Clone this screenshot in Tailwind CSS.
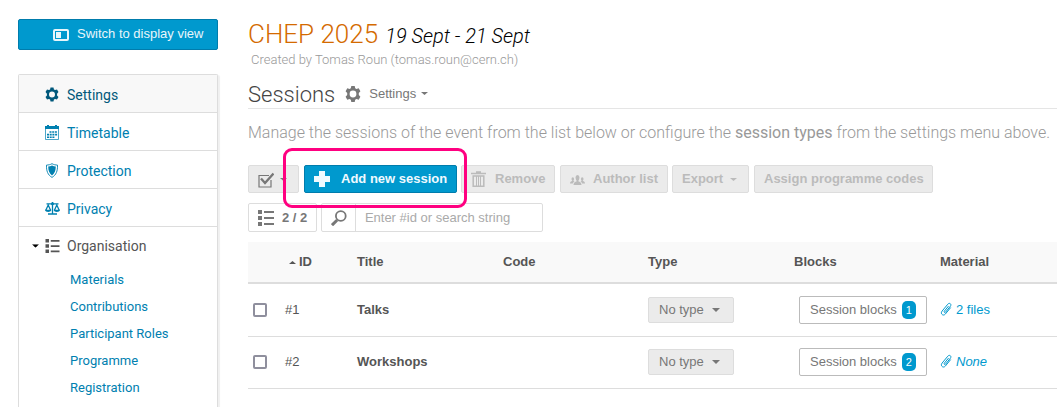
<!DOCTYPE html>
<html lang="en">
<head>
<meta charset="utf-8">
<title>CHEP 2025 - Sessions</title>
<script src="https://cdn.jsdelivr.net/npm/@tailwindcss/browser@4"></script>
</head>
<body class="bg-white font-['Liberation_Sans',sans-serif] text-[13px] leading-4 text-[#555]">
<svg class="hidden" aria-hidden="true">
  <symbol id="gear" viewBox="0 0 16 16"><path fill="currentColor" fill-rule="evenodd" d="M6.300 0h3.400l.5 2.200 1.300.7 2.200-.7 1.700 3L13.800 7v2l1.600 1.800-1.700 3-2.200-.7-1.300.7-.5 2.200H6.300l-.5-2.200-1.300-.7-2.200.7-1.700-3L2.200 9V7L.6 5.200l1.700-3 2.200.7 1.300-.7zM8 4.600a3.400 3.400 0 1 0 0 6.800 3.400 3.400 0 0 0 0-6.800z"/></symbol>
  <symbol id="list" viewBox="0 0 16 16"><path fill="currentColor" d="M0 0h4v4H0zM0 6h4v4H0zM0 12h4v4H0zM6 1h10v2H6zM6 7h10v2H6zM6 13h10v2H6z"/></symbol>
  <symbol id="caret" viewBox="0 0 8 4"><path fill="currentColor" d="M0 0h8L4 4z"/></symbol>
  <symbol id="clip" viewBox="0 0 12 14"><path fill="none" stroke="currentColor" stroke-linecap="round" stroke-linejoin="round" d="M8.300 4.400 4.300 9.200c-.7 1 .5 1.800 1.200 1l4.900-6c1.500-2-.9-4-2.600-2L2 9.200c-2 2.500 1.200 5.300 3.300 2.900l5.200-6.300"/></symbol>
</svg>
<div class="relative flex h-screen gap-[30px] overflow-hidden pl-[18px]">
  <aside class="flex w-[200px] shrink-0 flex-col gap-6 pt-[19px] font-[Roboto,sans-serif]">
    <button type="button" class="flex h-[31px] shrink-0 items-center gap-2 rounded-[2px] border border-[#007cac] bg-[#0099ce] pb-px pl-[34px] font-['Liberation_Sans',sans-serif] text-[13px] text-[#e8f6fb]">
      <svg class="mt-px h-3 w-4" viewBox="0 0 16 12"><rect x="1" y="1" width="14" height="10" rx="1" fill="none" stroke="currentColor" stroke-width="2"/><path fill="currentColor" d="M3 3h5v6H3z"/></svg>
      Switch to display view
    </button>
    <nav class="flex grow flex-col rounded-t-[2px] border border-b-0 border-[#ddd] text-sm leading-5 text-[#0080b0] shadow-[2px_1px_1px_#f0f0f0]">
      <a href="#" class="flex h-[38px] items-center gap-2 border-b border-[#ddd] bg-[#f8f8f8] pt-[2px] pl-[26px] text-[#00587b]"><svg class="h-[15px] w-[14px]"><use href="#gear"/></svg>Settings</a>
      <a href="#" class="flex h-[38px] items-center gap-2 border-b border-[#ddd] pt-[2px] pl-[26px]">
        <svg class="h-[15px] w-[14px]" viewBox="0 0 14 15"><path fill="currentColor" d="M0 1h2V0h2v1h6V0h2v1h2v3H0z"/><path fill="none" stroke="currentColor" stroke-opacity=".7" d="M.5 4v10.500h13V4"/><path fill="none" stroke="currentColor" stroke-width="1.600" stroke-dasharray="2 .7" d="M4.500 7h8M2 9.600h10.500M2 12.200h8"/></svg>Timetable</a>
      <a href="#" class="flex h-[38px] items-center gap-2 border-b border-[#ddd] pt-[2px] pl-[26px]">
        <svg class="h-[15px] w-[14px]" viewBox="0 0 14 15"><path fill="none" stroke="currentColor" stroke-width=".9" d="M7 .7c1.700 1 3.600 1.300 5.500 1.400C12.700 8 11.200 12 7 14.400 2.800 12 1.300 8 1.500 2.100 3.400 2 5.300 1.700 7 .7z"/><path fill="currentColor" d="M7 2.600c1.200.6 2.500.9 3.800 1-.1 4.200-1.100 7-3.800 9-2.700-2-3.700-4.800-3.800-9 1.300-.1 2.600-.4 3.800-1z"/></svg>Protection</a>
      <a href="#" class="flex h-[38px] items-center gap-[7px] border-b border-[#ddd] pt-[2px] pl-[26px]">
        <svg class="h-[13px] w-[15px]" viewBox="0 0 15 13"><path fill="none" stroke="currentColor" stroke-width="1.300" d="M1.500 1.800h12M7.500 0v11.500M3 12h9M.7 8.500 3.200 3l2.500 5.500M9.300 8.500 11.800 3l2.500 5.500"/><path fill="currentColor" d="M0 7.800h6.300c-.2 3-6.100 3-6.300 0zM8.700 7.800H15c-.2 3-6.100 3-6.300 0zM6 1.800a1.500 1.500 0 0 1 3 0 1.500 1.500 0 0 1-3 0z"/></svg>Privacy</a>
      <a href="#" class="flex h-[38px] items-center pl-[13px] text-[#555]"><svg class="mr-[6px] h-[4px] w-[7px] text-black" viewBox="0 0 8 4"><use href="#caret"/></svg><svg class="mr-[7px] h-[14px] w-[15px]"><use href="#list"/></svg>Organisation</a>
      <ul class="flex flex-col pt-px pl-[51px] text-[13px] leading-[27px]">
        <li><a href="#">Materials</a></li>
        <li><a href="#">Contributions</a></li>
        <li><a href="#">Participant Roles</a></li>
        <li><a href="#">Programme</a></li>
        <li><a href="#">Registration</a></li>
      </ul>
    </nav>
  </aside>

  <main class="min-w-0 grow pt-[18px]">
    <header class="font-[Roboto,sans-serif] font-light">
      <h1 class="flex items-baseline gap-[7px] text-[26px] leading-8 text-[#d46a00]">CHEP 2025 <span class="text-xl leading-8 text-black italic">19 Sept - 21 Sept</span></h1>
      <p class="pl-[3px] text-[13px] leading-4 text-[#999]">Created by Tomas Roun (tomas.roun@cern.ch)</p>
    </header>
    <div class="mt-3 flex h-[29px] items-center border-b border-[#e5e5e5]">
      <h2 class="pt-px font-[Roboto,sans-serif] text-[22px] leading-7 font-light text-[#444]">Sessions</h2>
      <button type="button" class="ml-[10px] flex items-center pb-px text-[#777]"><svg class="mr-2 h-4 w-4"><use href="#gear"/></svg>Settings<svg class="ml-[5px] h-[3px] w-[7px]" viewBox="0 0 8 4" preserveAspectRatio="none"><path fill="currentColor" d="M0 0h8L4 4z"/></svg></button>
    </div>
    <p class="mt-3 font-[Roboto,sans-serif] text-base leading-6 font-light whitespace-nowrap text-[#999]">Manage the sessions of the event from the list below or configure the <b class="font-normal">session types</b> from the settings menu above.</p>

    <div class="mt-5 flex gap-[5px] font-bold text-[#bbb]">
      <button type="button" aria-label="Select" class="flex h-7 w-[51px] items-center gap-[6px] rounded-[2px] border border-[#ddd] bg-[#ebebeb] pl-[9px] text-[#777]">
        <svg class="mt-px h-4 w-4" viewBox="0 0 16 16"><path fill="none" stroke="currentColor" stroke-width="1.200" d="M11 3.500H1V15h12V8"/><path fill="none" stroke="currentColor" stroke-width="2.300" d="m3 6.500 4 4.500 8.500-9.500"/></svg>
        <svg class="h-[3px] w-[7px]" viewBox="0 0 8 4" preserveAspectRatio="none"><path fill="currentColor" d="M0 0h8L4 4z"/></svg></button>
      <button type="button" class="flex h-7 w-[153px] items-center gap-[11px] rounded-[2px] border border-[#007cac] bg-[#0099ce] pl-[9px] text-[#f0faff]"><svg class="h-4 w-4" viewBox="0 0 16 16"><path fill="currentColor" d="M5 0h6v5h5v6h-5v5H5v-5H0V5h5z"/></svg>Add new session</button>
      <button type="button" disabled class="-ml-px flex h-7 w-[94px] items-center gap-[9px] rounded-[2px] border border-[#ddd] bg-[#ebebeb] pl-[9px]"><svg class="h-4 w-[15px]" viewBox="0 0 15 16"><path fill="none" stroke="currentColor" stroke-width="1.500" d="M0 2.500h15M5 1h5M2.200 5h10.600v10.200H2.200z"/><path stroke="currentColor" d="M5.500 5v10M7.500 5v10M9.500 5v10"/></svg>Remove</button>
      <button type="button" disabled class="flex h-7 w-[108px] items-center gap-2 rounded-[2px] border border-[#ddd] bg-[#ebebeb] pl-[9px]"><svg class="mt-[2px] h-[10px] w-[15px]" viewBox="0 0 15 10"><g fill="currentColor"><ellipse cx="7.500" cy="2.800" rx="2" ry="2.700"/><path d="M6.500 5h2v1.500c1.500.4 3 .9 3 3.500h-8c0-2.600 1.500-3.100 3-3.500z"/><ellipse cx="2.800" cy="4" rx="1.300" ry="1.800"/><path d="M0 8.500c0-1.800 1-2.200 2.200-2.500L2.300 5h1l.2 1 1 .4C3.500 7 3 7.600 2.800 8.500z"/><ellipse cx="12.200" cy="4" rx="1.300" ry="1.800"/><path d="M15 8.500c0-1.800-1-2.200-2.200-2.500l-.1-1h-1l-.2 1-1 .4c1 .6 1.500 1.200 1.700 2.100z"/></g></svg>Author list</button>
      <button type="button" disabled class="-ml-px flex h-7 w-[77px] items-center gap-[7px] rounded-[2px] border border-[#ddd] bg-[#ebebeb] pl-[9px]">Export<svg class="h-[3px] w-[7px]" viewBox="0 0 8 4" preserveAspectRatio="none"><path fill="currentColor" d="M0 0h8L4 4z"/></svg></button>
      <button type="button" disabled class="flex h-7 w-[179px] items-center rounded-[2px] border border-[#ddd] bg-[#ebebeb] pl-[9px]">Assign programme codes</button>
    </div>

    <div class="mt-[10px] flex gap-1 text-[#777]">
      <div class="flex h-[29px] w-[69px] items-center gap-2 rounded-[2px] border border-[#ddd] pl-[9px] font-bold"><svg class="h-4 w-4"><use href="#list"/></svg>2 / 2</div>
      <div class="flex h-[29px] w-[222px] rounded-[2px] border border-[#ddd]">
        <label for="search" aria-label="Search" class="flex w-[35px] items-center border-r border-[#ddd] pl-[9px]"><svg class="h-4 w-4" viewBox="0 0 16 16"><circle cx="9.800" cy="6" r="4.900" fill="none" stroke="currentColor" stroke-width="1.800"/><path stroke="currentColor" stroke-width="3" d="M6.200 10 1 15.200"/></svg></label>
        <input id="search" type="text" placeholder="Enter #id or search string" class="min-w-0 grow px-[9px] placeholder:text-[#aaa]">
      </div>
    </div>

    <table class="mt-[10px] w-full table-fixed border-collapse text-left">
      <colgroup><col class="w-8"><col class="w-[72px]"><col class="w-[146px]"><col class="w-[145px]"><col class="w-[146px]"><col class="w-[146px]"><col></colgroup>
      <thead>
        <tr class="h-[41px] border-b-2 border-[#ddd] bg-[#f9f9f9]">
          <th></th>
          <th class="pl-[9px]"><span class="flex items-center gap-[3px]"><svg class="h-[3px] w-[7px]" viewBox="0 0 8 4" preserveAspectRatio="none"><path fill="currentColor" d="M0 4h8L4 0z"/></svg>ID</span></th>
          <th class="pl-[5px]">Title</th><th class="pl-[5px]">Code</th><th class="pl-[5px]">Type</th><th class="pl-[5px]">Blocks</th><th class="pl-[5px]">Material</th>
        </tr>
      </thead>
      <tbody>
        <tr class="h-[53px] border-b border-[#ddd]">
          <td class="pl-[5px]"><input type="checkbox" aria-label="Select Talks" class="block size-[14px] appearance-none rounded-[2px] border-2 border-[#8f8f9d]"></td>
          <td class="pl-[5px]">#1</td><td class="pl-[5px] font-bold">Talks</td><td></td>
          <td class="pl-[5px]"><button type="button" class="flex h-[26px] w-[86px] items-center gap-2 rounded-[2px] border border-[#ddd] bg-[#ebebeb] pl-[10px] text-[#777]">No type<svg class="h-1 w-2"><use href="#caret"/></svg></button></td>
          <td class="pl-[10px]"><button type="button" class="flex h-[28px] w-[128px] items-center gap-[5px] rounded-[2px] border border-[#bbb] pl-[10px] text-[#777]">Session blocks<span class="flex h-[18px] w-[14px] items-center justify-center rounded-[5px] bg-[#0099ce] text-[11px] text-white">1</span></button></td>
          <td class="pl-[5px]"><a href="#" class="flex items-center gap-1 text-[#0099ce]"><svg class="mb-[2px] h-[14px] w-3"><use href="#clip"/></svg>2 files</a></td>
        </tr>
        <tr class="h-[52px] border-b border-[#ddd]">
          <td class="pl-[5px]"><input type="checkbox" aria-label="Select Workshops" class="block size-[14px] appearance-none rounded-[2px] border-2 border-[#8f8f9d]"></td>
          <td class="pl-[5px]">#2</td><td class="pl-[5px] font-bold">Workshops</td><td></td>
          <td class="pl-[5px]"><button type="button" class="flex h-[26px] w-[86px] items-center gap-2 rounded-[2px] border border-[#ddd] bg-[#ebebeb] pl-[10px] text-[#777]">No type<svg class="h-1 w-2"><use href="#caret"/></svg></button></td>
          <td class="pl-[10px]"><button type="button" class="flex h-[28px] w-[128px] items-center gap-[5px] rounded-[2px] border border-[#bbb] pl-[10px] text-[#777]">Session blocks<span class="flex h-[18px] w-[14px] items-center justify-center rounded-[5px] bg-[#0099ce] text-[11px] text-white">2</span></button></td>
          <td class="pl-[5px]"><a href="#" class="flex items-center gap-1 text-[#0099ce] italic"><svg class="mb-[2px] h-[14px] w-3"><use href="#clip"/></svg>None</a></td>
        </tr>
      </tbody>
    </table>
  </main>
  <div class="pointer-events-none absolute top-[148px] left-[283px] h-[60px] w-[184px] rounded-[9px] border-3 border-[#ff0080]"></div>
</div>
</body>
</html>
